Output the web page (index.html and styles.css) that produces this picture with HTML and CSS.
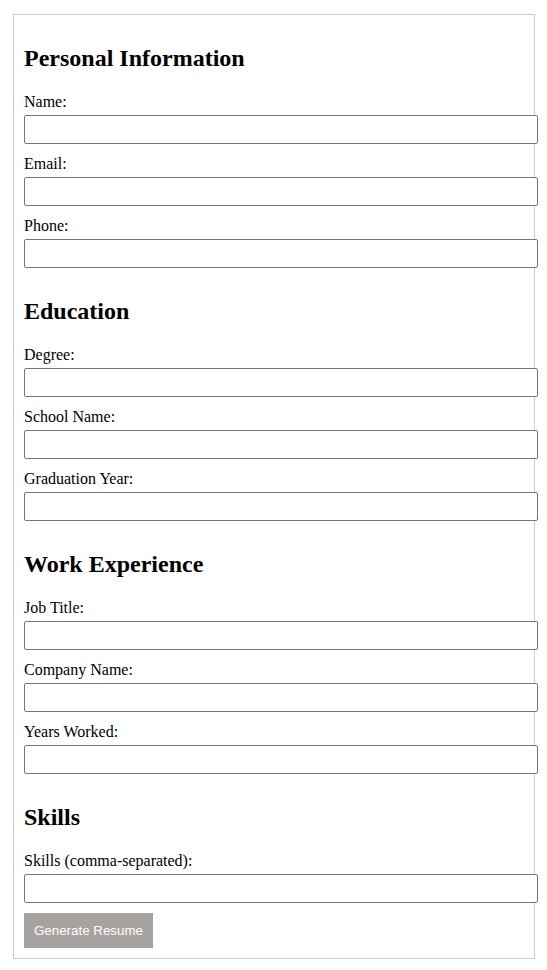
FILE: index.html
```html
<!DOCTYPE html>
<html>
<head>
<meta charset="utf-8">
<title>Resume Builder</title>
<link rel="stylesheet" href="styles.css">
</head>
<body>
<div class="container">
  <form class="resume-form">
    <div class="section">
      <h2 class="section-title">Personal Information</h2>
      <label class="field-label" for="name">Name:</label>
      <input class="field-input" type="text" id="name">
      <label class="field-label" for="email">Email:</label>
      <input class="field-input" type="text" id="email">
      <label class="field-label" for="phone">Phone:</label>
      <input class="field-input" type="text" id="phone">
    </div>

    <div class="section">
      <h2 class="section-title">Education</h2>
      <label class="field-label" for="degree">Degree:</label>
      <input class="field-input" type="text" id="degree">
      <label class="field-label" for="school">School Name:</label>
      <input class="field-input" type="text" id="school">
      <label class="field-label" for="grad">Graduation Year:</label>
      <input class="field-input" type="text" id="grad">
    </div>

    <div class="section">
      <h2 class="section-title">Work Experience</h2>
      <label class="field-label" for="job">Job Title:</label>
      <input class="field-input" type="text" id="job">
      <label class="field-label" for="company">Company Name:</label>
      <input class="field-input" type="text" id="company">
      <label class="field-label" for="years">Years Worked:</label>
      <input class="field-input" type="text" id="years">
    </div>

    <div class="section">
      <h2 class="section-title">Skills</h2>
      <label class="field-label" for="skills">Skills (comma-separated):</label>
      <input class="field-input" type="text" id="skills">
    </div>
    <button class="submit-btn" type="button">Generate Resume</button>
  </form>
</div>
</body>
</html>
```
FILE: styles.css
```css
body {
  margin: 0;
  font-family: "Liberation Serif", "Times New Roman", serif;
  font-size: 16px;
  color: #000;
  background: #fff;
}

.container {
  width: 500px;
  margin: 14px 0 0 13px;
  padding: 10px;
  border: 1px solid #cccccc;
}

.resume-form {
  margin: 0;
}

.section {
  display: flow-root;
}

.section-title {
  font-size: 24px;
  font-weight: bold;
  margin: 20px 0;
  line-height: normal;
}

.field-label {
  display: block;
  line-height: 19px;
  margin-bottom: 4px;
}

.field-input {
  display: block;
  padding: 6px;
  margin: 0 0 10px 0;
  border: 1px solid #767676;
  border-radius: 2px;
  font-family: "Liberation Sans", Arial, sans-serif;
  font-size: 13.333px;
  line-height: 15px;
  height: 29px;
  box-sizing: border-box;
  width: 514px;
}

.submit-btn {
  display: block;
  padding: 10px;
  border: none;
  background: #a6a2a0;
  color: #fff;
  font-family: "Liberation Sans", Arial, sans-serif;
  font-size: 13.333px;
  line-height: 15px;
  cursor: pointer;
}
```
